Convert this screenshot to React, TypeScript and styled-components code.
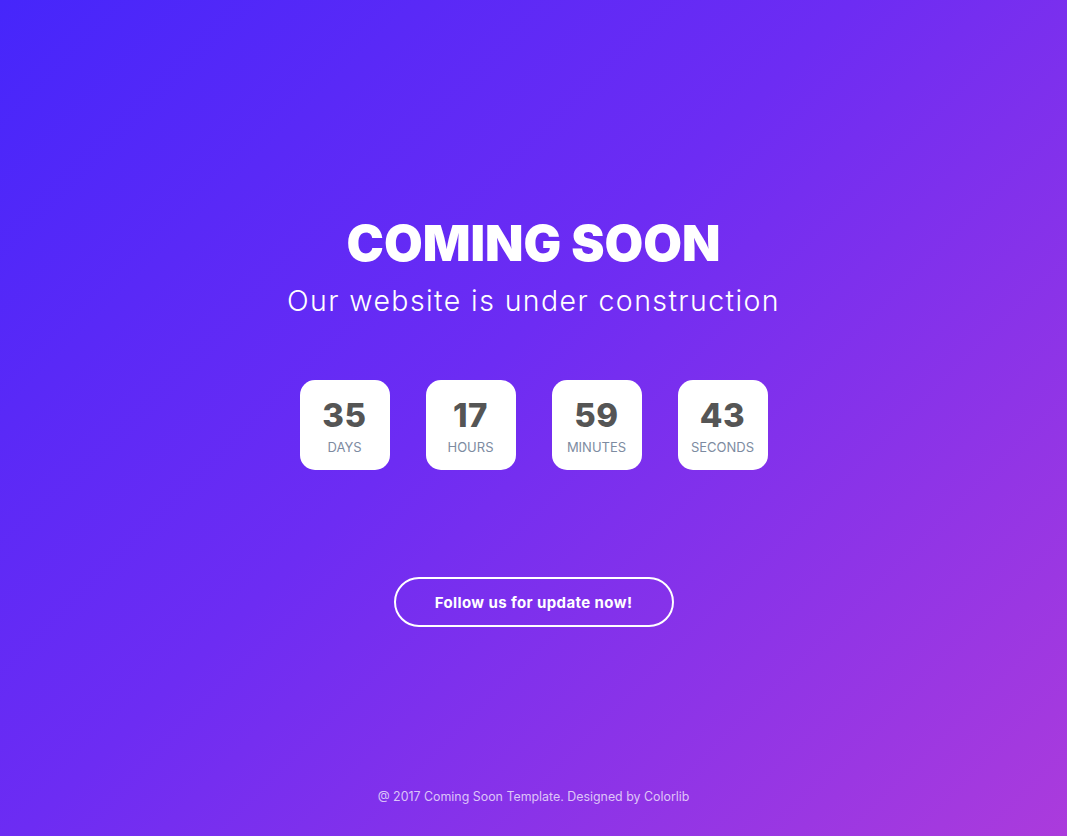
import React from "react";
import styled, { createGlobalStyle } from "styled-components";

const GlobalStyle = createGlobalStyle`
  html, body { margin: 0; padding: 0; }
  body { font-family: Inter, "Open Sans", sans-serif; }
  * { box-sizing: border-box; }
`;

const Page = styled.div`
  min-height: 100vh;
  display: flex;
  flex-direction: column;
  align-items: center;
  background: linear-gradient(135deg, #4626fb 0%, #6d2cf3 45%, #ab3bdc 100%);
  color: #fff;
`;

const Main = styled.main`
  flex: 1;
  display: flex;
  flex-direction: column;
  align-items: center;
  padding-top: 213px;
`;

const Title = styled.h1`
  margin: 0;
  font-size: 50px;
  line-height: 60px;
  font-weight: 900;
  text-transform: uppercase;
`;

const Subtitle = styled.p`
  margin: 11px 0 0;
  font-size: 28.5px;
  line-height: 34px;
  font-weight: 300;
  letter-spacing: 1.4px;
`;

const Countdown = styled.div`
  display: flex;
  gap: 36px;
  margin-top: 62px;
`;

const Box = styled.div`
  width: 90px;
  height: 90px;
  background: #fff;
  border-radius: 15px;
  display: flex;
  flex-direction: column;
  align-items: center;
  padding-top: 16px;
`;

const Num = styled.span`
  font-size: 33px;
  line-height: 38px;
  font-weight: 800;
  color: #555555;
  letter-spacing: 0.6px;
`;

const Label = styled.span`
  margin-top: 5px;
  font-size: 13px;
  line-height: 16px;
  color: #7d8ba1;
  text-transform: uppercase;
`;

const FollowButton = styled.button`
  margin-top: 107px;
  width: 280px;
  height: 50px;
  border: 2px solid #fff;
  border-radius: 25px;
  background: transparent;
  color: #fff;
  font-family: inherit;
  font-size: 15px;
  font-weight: 700;
  letter-spacing: 0.4px;
  cursor: pointer;
`;

const Footer = styled.footer`
  padding-bottom: 29px;
  font-size: 12.4px;
  line-height: 20px;
  color: rgba(255, 255, 255, 0.72);
`;

const units = [
  { value: "35", label: "Days" },
  { value: "17", label: "Hours" },
  { value: "59", label: "Minutes" },
  { value: "43", label: "Seconds" },
];

export default function App() {
  return (
    <>
      <GlobalStyle />
      <Page>
        <Main>
          <Title>Coming Soon</Title>
          <Subtitle>Our website is under construction</Subtitle>
          <Countdown>
            {units.map((u) => (
              <Box key={u.label}>
                <Num>{u.value}</Num>
                <Label>{u.label}</Label>
              </Box>
            ))}
          </Countdown>
          <FollowButton>Follow us for update now!</FollowButton>
        </Main>
        <Footer>@ 2017 Coming Soon Template. Designed by Colorlib</Footer>
      </Page>
    </>
  );
}
